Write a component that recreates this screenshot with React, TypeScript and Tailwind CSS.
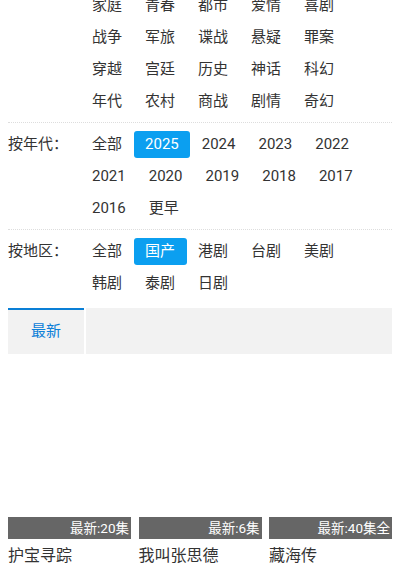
import React, { useState } from 'react';

// 筛选数据
const genreRows = [
  ['家庭', '青春', '都市', '爱情', '喜剧'],
  ['战争', '军旅', '谍战', '悬疑', '罪案'],
  ['穿越', '宫廷', '历史', '神话', '科幻'],
  ['年代', '农村', '商战', '剧情', '奇幻'],
];

const years = ['全部', '2025', '2024', '2023', '2022', '2021', '2020', '2019', '2018', '2017', '2016', '更早'];
const regions = ['全部', '国产', '港剧', '台剧', '美剧', '韩剧', '泰剧', '日剧'];

const dramas = [
  { id: 1, title: '护宝寻踪', note: '最新:20集' },
  { id: 2, title: '我叫张思德', note: '最新:6集' },
  { id: 3, title: '藏海传', note: '最新:40集全' },
];

const FilterItem: React.FC<{ label: string; active?: boolean; onClick?: () => void }> = ({ label, active, onClick }) => (
  <span
    onClick={onClick}
    className={`my-[2.5px] h-[27px] px-[11.5px] leading-[27px] rounded-[3px] cursor-pointer whitespace-nowrap ${
      active ? 'bg-[#0b9ff0] text-white' : 'text-[#333]'
    }`}
  >
    {label}
  </span>
);

const App: React.FC = () => {
  const [year, setYear] = useState('2025');
  const [region, setRegion] = useState('国产');

  return (
    <div
      className="h-[565px] overflow-hidden bg-white px-2 text-[15px] text-[#333]"
      style={{ fontFamily: 'Roboto, "Noto Sans CJK SC", sans-serif' }}
    >
      {/* 按类型（已滚动） */}
      <div className="-mt-[16.5px] pt-[5.5px] pb-[4.5px] border-b border-dotted border-[#ddd] flex">
        <div className="w-[72.5px] shrink-0" />
        <div className="flex flex-wrap">
          {genreRows.map((row, i) => (
            <div key={i} className="flex w-full">
              {row.map(g => (
                <FilterItem key={g} label={g} />
              ))}
            </div>
          ))}
        </div>
      </div>

      {/* 按年代 */}
      <div className="pt-[5.5px] pb-[4.5px] border-b border-dotted border-[#ddd] flex">
        <div className="w-[72.5px] shrink-0 mt-[2.5px] h-[27px] leading-[27px]">按年代：</div>
        <div className="flex flex-wrap flex-1">
          {years.map(y => (
            <FilterItem key={y} label={y} active={year === y} onClick={() => setYear(y)} />
          ))}
        </div>
      </div>

      {/* 按地区 */}
      <div className="pt-[5.5px] pb-[8.5px] flex">
        <div className="w-[72.5px] shrink-0 mt-[2.5px] h-[27px] leading-[27px]">按地区：</div>
        <div className="flex flex-wrap flex-1">
          {regions.map(r => (
            <FilterItem key={r} label={r} active={region === r} onClick={() => setRegion(r)} />
          ))}
        </div>
      </div>

      {/* 标签栏 */}
      <div className="flex gap-[2px] h-[46px]">
        <div className="w-[76px] bg-[#f2f2f2] border-t-2 border-[#0a7fd6] text-[#0d80d8] flex items-center justify-center">
          最新
        </div>
        <div className="flex-1 bg-[#f2f2f2]" />
      </div>

      {/* 剧集列表 */}
      <div className="mt-2 grid grid-cols-3 gap-x-[7.5px]">
        {dramas.map(d => (
          <div key={d.id}>
            <div className="relative h-[177px] bg-white">
              <div className="absolute bottom-0 left-0 right-0 h-[22px] bg-[#666] text-white text-[13.5px] leading-[22px] text-right pr-[2px] whitespace-nowrap overflow-hidden">
                {d.note}
              </div>
            </div>
            <div className="pt-[6px] leading-[22px] text-[16px] whitespace-nowrap">{d.title}</div>
          </div>
        ))}
      </div>
    </div>
  );
};

export default App;
